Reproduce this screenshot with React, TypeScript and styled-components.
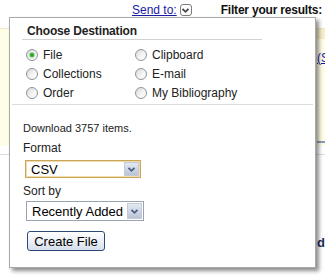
import React from "react";
import styled, { createGlobalStyle, css } from "styled-components";

const Global = createGlobalStyle`
  html, body { margin: 0; padding: 0; background: #fff; }
  body { font-family: "Liberation Sans", Arial, sans-serif; color: #222; }
  * { box-sizing: border-box; }
`;

const Page = styled.div`
  position: relative;
  width: 325px;
  height: 276px;
  overflow: hidden;
  background: #fff;
`;

const TopBar = styled.div`
  display: flex;
  align-items: center;
  height: 20px;
  margin-bottom: 8px;
  padding-left: 132px;
  font-size: 12px;
  line-height: 14px;
  white-space: nowrap;
`;

const SendLink = styled.a`
  color: #1a1aa6;
  text-decoration: underline;
  cursor: pointer;
`;

const ChevronBox = styled.span`
  display: inline-flex;
  align-items: center;
  justify-content: center;
  width: 12px;
  height: 12px;
  margin-left: 3px;
  border: 1px solid #7c7c7c;
  border-radius: 3px;
  background: #fff;
`;

const FilterTitle = styled.span`
  margin-left: 29px;
  font-weight: bold;
  letter-spacing: -0.2px;
  color: #111;
`;

const Band = styled.div`
  display: flex;
  justify-content: flex-end;
  height: 118px;
  background: #fffde8;
  border-top: 1px solid #eee7c4;
`;

const Side = styled.div`
  display: flex;
  flex-direction: column;
  width: 8px;
  overflow: hidden;
  white-space: nowrap;
`;

const SideTab = styled.div`
  height: 10px;
  background: #f7efc6;
`;

const SideLink = styled.a`
  margin-top: 12px;
  font-size: 12px;
  line-height: 14px;
  color: #1a1aa6;
  text-decoration: underline;
`;

const SideRule = styled.div`
  margin-top: 76px;
  height: 2px;
  background: #8e9db4;
`;

const LowerRule = styled.div`
  margin-top: 8px;
  height: 1px;
  background: #dedede;
`;

const Lower = styled.div`
  display: flex;
  justify-content: flex-end;
`;

const LowerSide = styled.div`
  width: 8px;
  overflow: hidden;
  white-space: nowrap;
  margin-top: 81px;
  font-size: 13px;
  line-height: 14px;
  font-weight: bold;
  color: #1c2f5a;
`;

const Popup = styled.div`
  position: absolute;
  left: 9px;
  top: 17px;
  width: 307px;
  height: 251px;
  background: #fff;
  border: 1px solid #a9a9a9;
  box-shadow: 3px 3px 4px rgba(0, 0, 0, 0.45);
`;

const Header = styled.div`
  margin-left: 12px;
  width: 240px;
  padding: 6px 0 0 5px;
  font-size: 12px;
  line-height: 15px;
  font-weight: bold;
  letter-spacing: -0.15px;
  color: #222;
  border-bottom: 1px solid #d2d2d2;
`;

const RadioGrid = styled.div`
  display: grid;
  grid-template-columns: 109px 1fr;
  grid-auto-rows: 19px;
  margin-top: 5px;
  padding-left: 16px;
`;

const RadioItem = styled.label`
  display: flex;
  align-items: center;
  gap: 5px;
  font-size: 12px;
  line-height: 14px;
  color: #222;
  white-space: nowrap;
`;

const RadioDot = styled.span<{ $checked?: boolean }>`
  position: relative;
  display: inline-block;
  width: 12px;
  height: 12px;
  border-radius: 50%;
  border: 1px solid #8d949b;
  background: linear-gradient(135deg, #d9d9d9 0%, #f4f4f4 55%, #ffffff 100%);
  ${(p) =>
    p.$checked &&
    css`
      &::after {
        content: "";
        position: absolute;
        left: 3px;
        top: 3px;
        width: 4px;
        height: 4px;
        border-radius: 50%;
        background: #2aa52a;
        box-shadow: 0 0 1px 1px #9fdc9f;
      }
    `}
`;

const Separator = styled.div`
  margin: 2px 2px 0;
  height: 1px;
  background: #dcdcdc;
`;

const Body = styled.div`
  display: flex;
  flex-direction: column;
  align-items: flex-start;
  padding: 17px 0 0 13px;
`;

const Note = styled.div`
  font-size: 11px;
  line-height: 13px;
  color: #222;
`;

const FieldLabel = styled.div<{ $gap: number }>`
  margin-top: ${(p) => p.$gap}px;
  font-size: 12px;
  line-height: 14px;
  color: #222;
`;

const SelectBox = styled.div<{ $width: number; $height: number; $indent: number; $gap: number; $focus?: boolean }>`
  display: flex;
  width: ${(p) => p.$width}px;
  height: ${(p) => p.$height}px;
  margin-top: ${(p) => p.$gap}px;
  margin-left: ${(p) => p.$indent}px;
  background: #fff;
  border: 1px solid ${(p) => (p.$focus ? "#caa55a" : "#9aa3ae")};
  ${(p) => p.$focus && css`box-shadow: inset 0 0 0 1px #efdcae;`}
`;

const NativeSelect = styled.select`
  flex: 1;
  min-width: 0;
  appearance: none;
  -webkit-appearance: none;
  border: none;
  outline: none;
  background: transparent;
  padding: 0 0 0 5px;
  margin: 0;
  font-family: "Liberation Sans", Arial, sans-serif;
  font-size: 13px;
  color: #000;
`;

const ArrowButton = styled.span`
  display: flex;
  align-items: center;
  justify-content: center;
  width: 15px;
  margin: 1px;
  border: 1px solid #c3cbd9;
  background: linear-gradient(#e4e9f2, #b9c4d8);
`;

const CreateButton = styled.button`
  width: 78px;
  height: 20px;
  margin-top: 10px;
  margin-left: 4px;
  padding: 0;
  font-family: "Liberation Sans", Arial, sans-serif;
  font-size: 13px;
  color: #000;
  border: 1px solid #2b4a78;
  border-radius: 3px;
  background: linear-gradient(#ffffff 0%, #eef2f7 45%, #d6dfeb 100%);
`;

const Chevron = ({ color = "#4d5f80" }: { color?: string }) => (
  <svg width="9" height="7" viewBox="0 0 9 7">
    <path d="M1.5 1.8 L4.5 4.8 L7.5 1.8" fill="none" stroke={color} strokeWidth="1.8" />
  </svg>
);

const options: [string, boolean][][] = [
  [["File", true], ["Clipboard", false]],
  [["Collections", false], ["E-mail", false]],
  [["Order", false], ["My Bibliography", false]],
];

export default function App() {
  return (
    <Page>
      <Global />
      <TopBar>
        <SendLink>Send to:</SendLink>
        <ChevronBox>
          <Chevron color="#444" />
        </ChevronBox>
        <FilterTitle>Filter your results:</FilterTitle>
      </TopBar>
      <Band>
        <Side>
          <SideTab />
          <SideLink>(Show all)</SideLink>
          <SideRule />
        </Side>
      </Band>
      <LowerRule />
      <Lower>
        <LowerSide>delete</LowerSide>
      </Lower>

      <Popup>
        <Header>Choose Destination</Header>
        <RadioGrid>
          {options.flat().map(([label, checked]) => (
            <RadioItem key={label}>
              <RadioDot $checked={checked} />
              {label}
            </RadioItem>
          ))}
        </RadioGrid>
        <Separator />
        <Body>
          <Note>Download 3757 items.</Note>
          <FieldLabel $gap={6}>Format</FieldLabel>
          <SelectBox $width={116} $height={18} $indent={2} $gap={5} $focus>
            <NativeSelect defaultValue="CSV">
              <option>CSV</option>
            </NativeSelect>
            <ArrowButton>
              <Chevron />
            </ArrowButton>
          </SelectBox>
          <FieldLabel $gap={6}>Sort by</FieldLabel>
          <SelectBox $width={118} $height={20} $indent={3} $gap={3}>
            <NativeSelect defaultValue="Recently Added">
              <option>Recently Added</option>
            </NativeSelect>
            <ArrowButton>
              <Chevron />
            </ArrowButton>
          </SelectBox>
          <CreateButton>Create File</CreateButton>
        </Body>
      </Popup>
    </Page>
  );
}
